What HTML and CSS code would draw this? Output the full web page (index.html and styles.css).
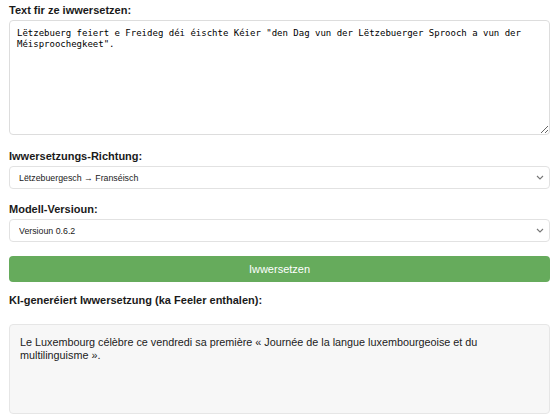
FILE: index.html
```html
<!DOCTYPE html>
<html>
<head>
  <meta charset="utf-8">
  <title>Iwwersetzer</title>
  <link rel="stylesheet" href="styles.css">
</head>
<body>
  <div class="page">
    <label class="field-label" for="source">Text fir ze iwwersetzen:</label>
    <textarea id="source" class="source-text">Lëtzebuerg feiert e Freideg déi éischte Kéier "den Dag vun der Lëtzebuerger Sprooch a vun der Méisproochegkeet".</textarea>

    <label class="field-label" for="direction">Iwwersetzungs-Richtung:</label>
    <div class="select-wrap">
      <select id="direction" class="picker">
        <option>Lëtzebuergesch → Franséisch</option>
        <option>Franséisch → Lëtzebuergesch</option>
      </select>
      <svg class="chevron" width="8" height="5" viewBox="0 0 8 5"><path d="M1 1l3 3 3-3" fill="none" stroke="#777" stroke-width="1.1"/></svg>
    </div>

    <label class="field-label" for="model">Modell-Versioun:</label>
    <div class="select-wrap">
      <select id="model" class="picker">
        <option>Versioun 0.6.2</option>
      </select>
      <svg class="chevron" width="8" height="5" viewBox="0 0 8 5"><path d="M1 1l3 3 3-3" fill="none" stroke="#777" stroke-width="1.1"/></svg>
    </div>

    <button class="btn-translate">Iwwersetzen</button>

    <div class="field-label result-label">KI-generéiert Iwwersetzung (ka Feeler enthalen):</div>
    <div class="result">Le Luxembourg célèbre ce vendredi sa première « Journée de la langue luxembourgeoise et du multilinguisme ».</div>
  </div>
</body>
</html>
```

FILE: styles.css
```css
body {
  margin: 0;
  font-family: "Liberation Sans", Arial, sans-serif;
  color: #222;
  background: #fff;
}

.page {
  padding: 3px 10px 0 9px;
}

.field-label {
  display: block;
  font-size: 11px;
  font-weight: bold;
  line-height: 14px;
  color: #1a1a1a;
  margin-bottom: 3px;
}

.source-text {
  display: block;
  box-sizing: border-box;
  width: 100%;
  height: 115px;
  margin: 0;
  padding: 7px 7px;
  border: 1px solid #ddd;
  border-radius: 4px;
  font-family: "DejaVu Sans Mono", monospace;
  font-size: 9px;
  line-height: 10.5px;
  color: #000;
}

.source-text + .field-label {
  margin-top: 14px;
}

.select-wrap {
  position: relative;
}

.picker {
  display: block;
  box-sizing: border-box;
  width: 100%;
  height: 23px;
  margin: 0;
  padding: 0 9px;
  border: 1px solid #e2e2e2;
  border-radius: 4px;
  background: #fff;
  font-family: "Liberation Sans", Arial, sans-serif;
  font-size: 8.8px;
  color: #1a1a1a;
  appearance: none;
  -webkit-appearance: none;
}

.chevron {
  position: absolute;
  right: 6px;
  top: 9px;
}

.select-wrap + .field-label {
  margin-top: 13px;
}

.btn-translate {
  display: block;
  width: 100%;
  height: 26px;
  margin-top: 14px;
  border: none;
  border-radius: 4px;
  background-color: #66ab5c;
  color: #fff;
  font-family: "Liberation Sans", Arial, sans-serif;
  font-size: 11px;
}

.result-label {
  margin-top: 11px;
  margin-bottom: 17px;
}

.result {
  box-sizing: border-box;
  height: 90px;
  padding: 11px 10px;
  border: 1px solid #e6e6e6;
  border-radius: 4px;
  background: #f7f7f7;
  font-size: 10.8px;
  line-height: 13px;
  color: #222;
}
```
